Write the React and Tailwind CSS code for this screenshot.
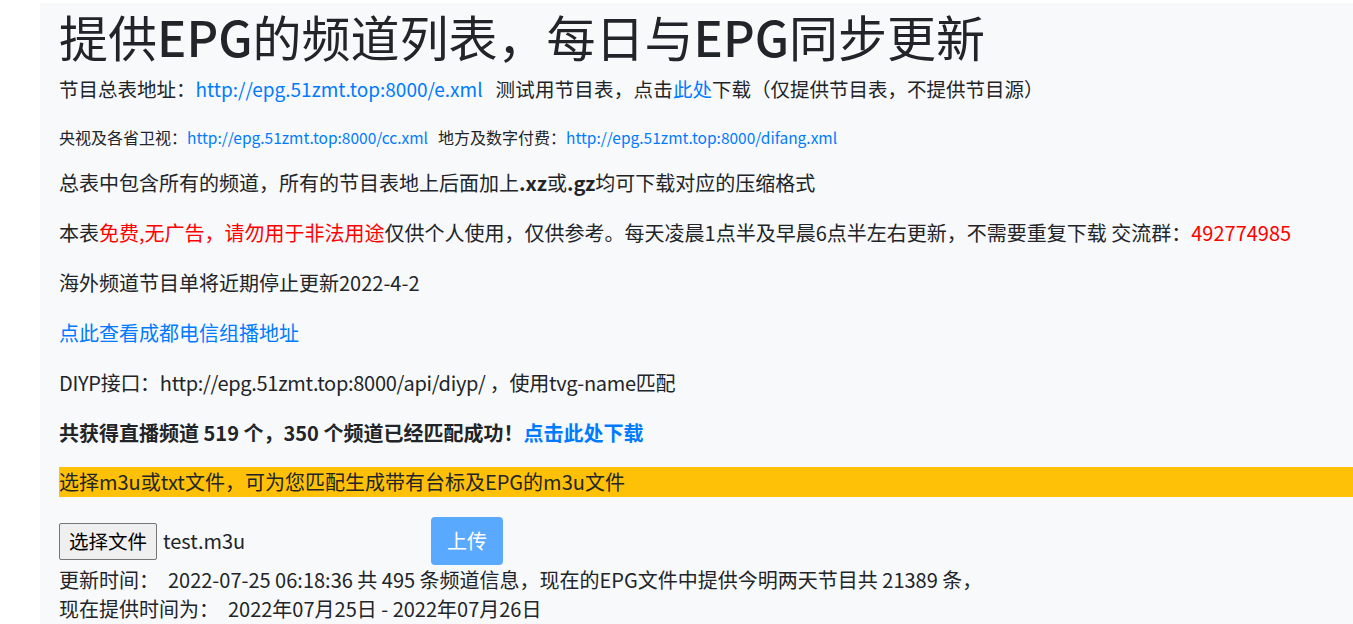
export default function App() {
  const font = { fontFamily: '"Noto Sans CJK SC", "Noto Sans", sans-serif' };
  return (
    <div className="w-[1353px] h-[624px] overflow-hidden bg-white pl-10 pt-[3px]" style={font}>
      <div className="w-[1400px] h-full bg-[#f8f9fa] px-[19px] pt-[3px] text-[#212529]">
        {/* Title */}
        <h1 className="text-[49px] leading-[60px] font-normal whitespace-nowrap">
          提供<span className="font-medium">EPG</span>的频道列表，每日与<span className="font-medium">EPG</span>同步更新
        </h1>

        <p className="mt-2 text-[19.5px] leading-[30px] whitespace-nowrap">
          节目总表地址：<a className="text-[#007bff] text-[19px]">http://epg.51zmt.top:8000/e.xml</a>
          <span className="ml-[13px] tracking-[0.2px]">测试用节目表，点击</span>
          <a className="text-[#007bff]">此处</a>下载（仅提供节目表，不提供节目源）
        </p>

        <p className="mt-[21px] text-[16px] leading-[24px] whitespace-nowrap">
          央视及各省卫视：<a className="text-[#007bff] text-[15.5px]">http://epg.51zmt.top:8000/cc.xml</a>
          <span className="ml-[10px]">地方及数字付费：</span>
          <a className="text-[#007bff] text-[15.5px]">http://epg.51zmt.top:8000/difang.xml</a>
        </p>

        <div className="mt-[19px] flex flex-col gap-5 text-[20px] leading-[30px] whitespace-nowrap">
          <p>
            总表中包含所有的频道，所有的节目表地上后面加上<b>.xz</b>或<b>.gz</b>均可下载对应的压缩格式
          </p>
          <p>
            本表<span className="text-[#ff0000]">免费,无广告，请勿用于非法用途</span>
            仅供个人使用，仅供参考。每天凌晨1点半及早晨6点半左右更新，不需要重复下载 交流群：
            <span className="text-[#ff0000]">492774985</span>
          </p>
          <p>海外频道节目单将近期停止更新2022-4-2</p>
          <p>
            <a className="text-[#007bff]">点此查看成都电信组播地址</a>
          </p>
          <p className="tracking-[-0.3px]">DIYP接口：http://epg.51zmt.top:8000/api/diyp/ ，使用tvg-name匹配</p>
          <p className="font-bold">
            共获得直播频道 519 个，350 个频道已经匹配成功！
            <a className="text-[#007bff]">点击此处下载</a>
          </p>
        </div>

        <div className="mt-[19px] h-[30px] bg-[#ffc107] text-[20px] leading-[30px] whitespace-nowrap">
          选择m3u或txt文件，可为您匹配生成带有台标及EPG的m3u文件
        </div>

        <div className="mt-5 h-12 flex items-center text-[20px]">
          <div className="w-[372px] flex items-center">
            <button className="h-[37px] px-[9px] bg-[#efefef] border border-[#767676] rounded-[2px] text-[19.5px] leading-none text-black">
              选择文件
            </button>
            <span className="ml-[6px]">test.m3u</span>
          </div>
          <button className="h-12 w-[72px] rounded-[4px] bg-[#59a9ff] text-white text-[20px]">
            上传
          </button>
        </div>

        <div className="text-[20px] leading-[29px] whitespace-nowrap">
          <p>更新时间：&nbsp; 2022-07-25 06:18:36 共 495 条频道信息，现在的EPG文件中提供今明两天节目共 21389 条，</p>
          <p>现在提供时间为：&nbsp; 2022年07月25日 - 2022年07月26日</p>
        </div>
      </div>
    </div>
  );
}
